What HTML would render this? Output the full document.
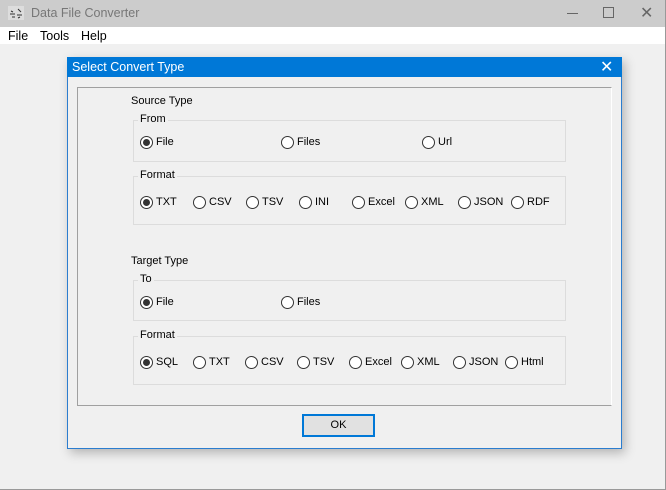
<!DOCTYPE html>
<html><head><meta charset="utf-8"><style>
*,*::before,*::after{box-sizing:border-box;margin:0;padding:0}
body{width:666px;height:490px;position:relative;background:#f0f0f0;font-family:"Liberation Sans",sans-serif;font-size:12px;color:#000;overflow:hidden}
.a{position:absolute}
.gb{position:absolute;border:1px solid #dcdcdc}
.gl{position:absolute;background:#f0f0f0;padding:0 2px;top:-8px;left:4px;font-size:11px}
.r{position:absolute;height:13px;font-size:11px;line-height:13px;padding-left:16px;white-space:nowrap}
.r:before{content:"";position:absolute;left:0;top:0;width:13px;height:13px;border:1px solid #333;border-radius:50%;background:#fff}
.r.c:after{content:"";position:absolute;left:3px;top:3px;width:7px;height:7px;border-radius:50%;background:#333}
</style></head><body>
<div class="a" style="left:0;top:0;width:666px;height:27px;background:#cccccc"></div>
<svg class="a" style="left:8px;top:6px" width="16" height="14"><rect x="0" y="0" width="16" height="14" fill="#ddd"/><path d="M2 8h5M9 9h5M3 5l2 1M10 3l3 3M4 11h3M10 12l2-1" stroke="#333" stroke-width="1"/></svg>
<div class="a" style="left:31px;top:6px;color:#777;font-size:12.5px">Data File Converter</div>
<div class="a" style="left:567px;top:13px;width:11px;height:1px;background:#666"></div>
<div class="a" style="left:603px;top:7px;width:11px;height:11px;border:1px solid #666"></div>
<div class="a" style="left:640px;top:3px;font-size:16px;color:#666">✕</div>
<div class="a" style="left:0;top:27px;width:665px;height:17px;background:#fff"></div>
<div class="a" style="left:8px;top:29px;font-size:12.5px">File</div>
<div class="a" style="left:40px;top:29px;font-size:12.5px">Tools</div>
<div class="a" style="left:81px;top:29px;font-size:12.5px">Help</div>
<div class="a" style="left:665px;top:0;width:1px;height:490px;background:#999"></div>
<div class="a" style="left:0;top:489px;width:666px;height:1px;background:#999"></div>

<div class="a" style="left:67px;top:57px;width:555px;height:392px;border:1px solid #2b7dcf;background:#f0f0f0;box-shadow:3px 4px 10px rgba(0,0,0,.25)"></div>
<div class="a" style="left:67px;top:57px;width:555px;height:20px;background:#0078d7"></div>
<div class="a" style="left:72px;top:60px;color:#fff;font-size:12.5px">Select Convert Type</div>
<div class="a" style="left:600px;top:57px;color:#fff;font-size:16px">✕</div>
<div class="a" style="left:77px;top:87px;width:535px;height:319px;border:1px solid #a0a0a0;border-right-color:#fff;border-bottom-color:#a0a0a0"></div>

<div class="a" style="left:131px;top:95px;font-size:11px">Source Type</div>
<div class="gb" style="left:133px;top:120px;width:433px;height:42px"><span class="gl">From</span></div>
<div class="r c" style="left:140px;top:136px">File</div>
<div class="r" style="left:281px;top:136px">Files</div>
<div class="r" style="left:422px;top:136px">Url</div>
<div class="gb" style="left:133px;top:176px;width:433px;height:49px"><span class="gl">Format</span></div>
<div class="r c" style="left:140px;top:196px">TXT</div>
<div class="r" style="left:193px;top:196px">CSV</div>
<div class="r" style="left:246px;top:196px">TSV</div>
<div class="r" style="left:299px;top:196px">INI</div>
<div class="r" style="left:352px;top:196px">Excel</div>
<div class="r" style="left:405px;top:196px">XML</div>
<div class="r" style="left:458px;top:196px">JSON</div>
<div class="r" style="left:511px;top:196px">RDF</div>

<div class="a" style="left:131px;top:255px;font-size:11px">Target Type</div>
<div class="gb" style="left:133px;top:280px;width:433px;height:41px"><span class="gl">To</span></div>
<div class="r c" style="left:140px;top:296px">File</div>
<div class="r" style="left:281px;top:296px">Files</div>
<div class="gb" style="left:133px;top:336px;width:433px;height:49px"><span class="gl">Format</span></div>
<div class="r c" style="left:140px;top:356px">SQL</div>
<div class="r" style="left:193px;top:356px">TXT</div>
<div class="r" style="left:245px;top:356px">CSV</div>
<div class="r" style="left:297px;top:356px">TSV</div>
<div class="r" style="left:349px;top:356px">Excel</div>
<div class="r" style="left:401px;top:356px">XML</div>
<div class="r" style="left:453px;top:356px">JSON</div>
<div class="r" style="left:505px;top:356px">Html</div>

<div class="a" style="left:302px;top:414px;width:73px;height:23px;border:2px solid #0078d7;background:#e1e1e1;text-align:center;line-height:19px;font-size:11px">OK</div>
</body></html>
